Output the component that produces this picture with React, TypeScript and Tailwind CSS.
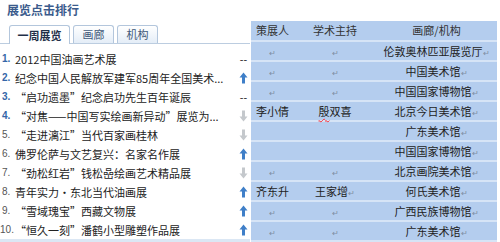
import React from 'react';

type Trend = 'flat' | 'up' | 'down';

const items: { text: string; trend: Trend }[] = [
  { text: '2012中国油画艺术展', trend: 'flat' },
  { text: '纪念中国人民解放军建军85周年全国美术...', trend: 'up' },
  { text: '“启功遗墨”纪念启功先生百年诞辰', trend: 'flat' },
  { text: '“对焦——中国写实绘画新异动”展览为...', trend: 'down' },
  { text: '“走进漓江”当代百家画桂林', trend: 'down' },
  { text: '佛罗伦萨与文艺复兴：名家名作展', trend: 'up' },
  { text: '“劲松红岩”钱松喦绘画艺术精品展', trend: 'down' },
  { text: '青年实力·东北当代油画展', trend: 'up' },
  { text: '“雪域瑰宝”西藏文物展', trend: 'up' },
  { text: '“恒久一刻”潘鹤小型雕塑作品展', trend: 'up' },
];

const rows: [string, string, string][] = [
  ['↵', '↵', '伦敦奥林匹亚展览厅'],
  ['↵', '↵', '中国美术馆'],
  ['↵', '↵', '中国国家博物馆'],
  ['李小倩', '殷双喜', '北京今日美术馆'],
  ['', '', '广东美术馆'],
  ['', '', '中国国家博物馆'],
  ['↵', '↵', '北京画院美术馆'],
  ['齐东升', '王家增↵', '何氏美术馆'],
  ['↵', '↵', '广西民族博物馆'],
  ['↵', '↵', '广东美术馆'],
];

const cjk = "font-['Noto_Sans_CJK_SC',sans-serif]";

const Arrow = ({ up }: { up: boolean }) => (
  <svg width="9" height="12" viewBox="0 0 9 12">
    {up ? (
      <path d="M4.5 0.5 L8.5 5.5 L6 5.5 L6 11.5 L3 11.5 L3 5.5 L0.5 5.5 Z" fill="#3f7fc8" />
    ) : (
      <path d="M4.5 11.5 L8.5 6.5 L6 6.5 L6 0.5 L3 0.5 L3 6.5 L0.5 6.5 Z" fill="#c4c8cc" />
    )}
  </svg>
);

const Mark = ({ value }: { value: string }) => {
  if (value === '↵') return <span className="text-[8px] text-[#7f8ea3]">↵</span>;
  if (value.endsWith('↵'))
    return (
      <span>
        {value.slice(0, -1)}
        <span className="text-[8px] text-[#7f8ea3]">↵</span>
      </span>
    );
  if (value === '殷双喜')
    return (
      <span>
        <span className="underline decoration-wavy decoration-red-500 decoration-1 underline-offset-2">殷</span>双喜
      </span>
    );
  return <span>{value}</span>;
};

export default function App() {
  return (
    <div className={`w-[500px] h-[242px] bg-white flex overflow-hidden ${cjk}`}>
      <div className="w-[250px] shrink-0 flex flex-col overflow-hidden">
        <div className="h-[25px] pl-[7px] pt-[2px] text-[12px] leading-[16px] font-bold text-[#3b5b8c]">
          展览点击排行
        </div>
        <div className="h-[19px] flex items-end gap-[3px] pl-[9px] border-b border-[#bccde0]">
          <div className="w-[61px] h-[19px] -mb-px bg-white border border-b-0 border-[#b3c6dc] rounded-t-[3px] flex items-center justify-center text-[11px] font-bold text-[#1f2f48]">
            一周展览
          </div>
          <div className="w-[41px] h-[18px] bg-gradient-to-b from-white to-[#e4edf7] border border-b-0 border-[#b3c6dc] rounded-t-[3px] flex items-center justify-center text-[11px] text-[#3f5878]">
            画廊
          </div>
          <div className="w-[41px] h-[18px] bg-gradient-to-b from-white to-[#e4edf7] border border-b-0 border-[#b3c6dc] rounded-t-[3px] flex items-center justify-center text-[11px] text-[#3f5878]">
            机构
          </div>
        </div>
        <div className="pt-[5px] flex flex-col">
          {items.map((it, i) => (
            <div key={i} className="h-[19px] flex items-center pl-[2px]">
              <span
                className={`shrink-0 text-[10px] leading-[14px] pt-[1px] font-['Liberation_Sans',sans-serif] ${
                  i < 4 ? 'text-[#3566a8] font-bold' : 'text-[#555]'
                } ${i === 9 ? 'w-[14px] -ml-[2px] mr-[1px]' : 'w-[13px]'}`}
              >
                {i + 1}.
              </span>
              <span className="flex-1 whitespace-nowrap text-[11px] leading-[14px] text-[#222]">{it.text}</span>
              <span className="w-[13px] shrink-0 flex justify-center">
                {it.trend === 'flat' ? (
                  <span className="text-[11px] leading-[14px] text-[#333] font-['Liberation_Sans',sans-serif]">--</span>
                ) : (
                  <Arrow up={it.trend === 'up'} />
                )}
              </span>
            </div>
          ))}
        </div>
        <div className="mt-auto h-[3px] bg-[#dbe7f4]" />
      </div>
      <div className="w-[246px] ml-[1px] mt-[21px] flex flex-col bg-[#b4cdee] text-[11px] text-[#222]">
        <div className="h-[21px] flex items-center border-b-2 border-[#d6e4f6] text-[#333]">
          <div className="w-[43px] text-center">策展人</div>
          <div className="w-[82px] text-center">学术主持</div>
          <div className="w-[121px] text-center">画廊/机构</div>
        </div>
        {rows.map((r, i) => (
          <div key={i} className="h-[20px] shrink-0 flex items-center border-b-2 border-[#d6e4f6]">
            <div className="w-[43px] text-center"><Mark value={r[0]} /></div>
            <div className="w-[82px] text-center"><Mark value={r[1]} /></div>
            <div className="w-[121px] text-center"><Mark value={r[2] + '↵'} /></div>
          </div>
        ))}
      </div>
    </div>
  );
}
